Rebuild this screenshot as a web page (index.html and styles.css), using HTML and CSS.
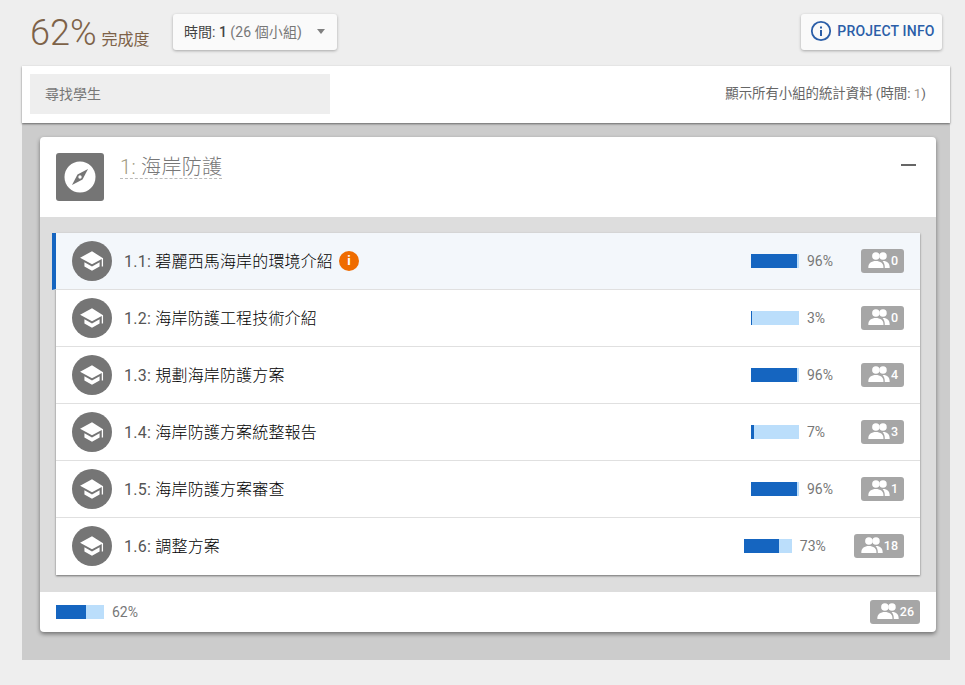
FILE: index.html
```html
<!DOCTYPE html>
<html lang="zh-Hant">
<head>
    <meta charset="UTF-8">
    <title>完成度</title>
    <link rel="stylesheet" href="styles.css">
</head>
<body>
<svg class="defs" width="0" height="0">
    <symbol id="cap" viewBox="0 0 24 24">
        <path d="M5 13.18v4L12 21l7-3.82v-4L12 17l-7-3.82zM12 3 1 9l11 6 9-4.91V17h1.200V9.500L12 3z"/>
    </symbol>
    <symbol id="people" viewBox="0 0 24 18">
        <circle cx="8.5" cy="4.6" r="4.2"/>
        <circle cx="16.5" cy="4.6" r="4.2"/>
        <path d="M0 17c0-4.6 3.6-7 8.5-7s8.5 2.4 8.5 7v1H0z"/>
        <path d="M16 10.100c4.900-.4 8 2.300 8 6.900v1h-5.500v-1c0-2.900-.9-5.200-2.500-6.900z"/>
    </symbol>
</svg>

<header class="topbar">
    <div class="score"><span class="score-num">62%</span> <span class="score-label">完成度</span></div>
    <div class="picker">
        <span>時間: <b>1</b> <span class="muted">(26 個小組)</span></span>
        <i class="caret"></i>
    </div>
    <button class="info-btn">
        <svg width="22" height="22" viewBox="0 0 22 22">
            <circle cx="11" cy="11" r="9.200" fill="none" stroke="#2b5ea8" stroke-width="1.800"/>
            <rect x="10" y="10" width="2" height="6" fill="#2b5ea8"/>
            <rect x="10" y="6.500" width="2" height="2" fill="#2b5ea8"/>
        </svg>
        PROJECT INFO
    </button>
</header>

<main class="panel">
    <div class="filter">
        <div class="search">尋找學生</div>
        <div class="filter-note">顯示所有小組的統計資料 (時間: <span class="faint">1</span>)</div>
    </div>

    <section class="card">
        <div class="card-head">
            <div class="unit-icon">
                <svg width="32" height="32" viewBox="0 0 32 32">
                    <circle cx="16" cy="16" r="15.500" fill="#fff"/>
                    <path d="M24 8 18.500 18.500 8 24l5.500-10.500z" fill="#757575"/>
                    <circle cx="16" cy="16" r="1.700" fill="#fff"/>
                </svg>
            </div>
            <h2 class="unit-title"><span class="faint-num">1:</span> 海岸防護</h2>
            <i class="collapse"></i>
        </div>

        <div class="card-body">
            <ul class="steps">
                <li class="step active">
                    <div class="step-icon"><svg width="26" height="26"><use href="#cap"/></svg></div>
                    <div class="step-name"><span class="num">1.1:</span> 碧麗西馬海岸的環境介紹</div>
                    <span class="alert">i</span>
                    <div class="bar"><div class="fill" style="width:96%"></div></div>
                    <span class="pct">96%</span>
                    <span class="badge"><svg width="22" height="16"><use href="#people"/></svg>0</span>
                </li>
                <li class="step">
                    <div class="step-icon"><svg width="26" height="26"><use href="#cap"/></svg></div>
                    <div class="step-name"><span class="num">1.2:</span> 海岸防護工程技術介紹</div>
                    <div class="bar"><div class="fill" style="width:3%"></div></div>
                    <span class="pct">3%</span>
                    <span class="badge"><svg width="22" height="16"><use href="#people"/></svg>0</span>
                </li>
                <li class="step">
                    <div class="step-icon"><svg width="26" height="26"><use href="#cap"/></svg></div>
                    <div class="step-name"><span class="num">1.3:</span> 規劃海岸防護方案</div>
                    <div class="bar"><div class="fill" style="width:96%"></div></div>
                    <span class="pct">96%</span>
                    <span class="badge"><svg width="22" height="16"><use href="#people"/></svg>4</span>
                </li>
                <li class="step">
                    <div class="step-icon"><svg width="26" height="26"><use href="#cap"/></svg></div>
                    <div class="step-name"><span class="num">1.4:</span> 海岸防護方案統整報告</div>
                    <div class="bar"><div class="fill" style="width:7%"></div></div>
                    <span class="pct">7%</span>
                    <span class="badge"><svg width="22" height="16"><use href="#people"/></svg>3</span>
                </li>
                <li class="step">
                    <div class="step-icon"><svg width="26" height="26"><use href="#cap"/></svg></div>
                    <div class="step-name"><span class="num">1.5:</span> 海岸防護方案審查</div>
                    <div class="bar"><div class="fill" style="width:96%"></div></div>
                    <span class="pct">96%</span>
                    <span class="badge"><svg width="22" height="16"><use href="#people"/></svg>1</span>
                </li>
                <li class="step">
                    <div class="step-icon"><svg width="26" height="26"><use href="#cap"/></svg></div>
                    <div class="step-name"><span class="num">1.6:</span> 調整方案</div>
                    <div class="bar"><div class="fill" style="width:73%"></div></div>
                    <span class="pct">73%</span>
                    <span class="badge"><svg width="22" height="16"><use href="#people"/></svg>18</span>
                </li>
            </ul>
        </div>

        <div class="card-foot">
            <div class="bar"><div class="fill" style="width:62%"></div></div>
            <span class="pct">62%</span>
            <span class="badge"><svg width="22" height="16"><use href="#people"/></svg>26</span>
        </div>
    </section>
</main>
</body>
</html>
```

FILE: styles.css
```css
* { margin: 0; padding: 0; box-sizing: border-box; }
ul { list-style: none; }
body {
    background-color: #eee;
    font-family: Roboto, "Noto Sans CJK TC", sans-serif;
    color: #333;
    height: 685px;
    overflow: hidden;
}
.defs { display: block; height: 0; }

/* top bar */
.topbar {
    height: 66px;
    padding: 14px 23px 0 30px;
    display: flex;
    align-items: flex-start;
}
.score {
    width: 143px;
    height: 36px;
    display: flex;
    align-items: baseline;
    gap: 5px;
    color: #7d6248;
    white-space: nowrap;
}
.score-num { font-size: 36px; font-weight: 300; line-height: 38px; }
.score-label { font-size: 16px; }
.picker {
    width: 164px;
    height: 36px;
    padding: 0 12px 2px 11px;
    display: flex;
    align-items: center;
    justify-content: space-between;
    background-color: #fafafa;
    border-radius: 3px;
    box-shadow: 0 1px 3px rgba(0,0,0,.3);
    font-size: 14px;
    color: #444;
    white-space: nowrap;
}
.picker b { font-weight: 500; }
.muted { color: #777; letter-spacing: .1px; }
.caret {
    width: 0;
    height: 0;
    border-left: 4.500px solid transparent;
    border-right: 4.500px solid transparent;
    border-top: 5px solid #808080;
}
.info-btn {
    margin-left: auto;
    width: 141px;
    height: 36px;
    padding: 0 0 2px 2px;
    display: flex;
    align-items: center;
    justify-content: center;
    gap: 5px;
    border: 0;
    background-color: #fafafa;
    border-radius: 3px;
    box-shadow: 0 1px 3px rgba(0,0,0,.3);
    font-family: inherit;
    font-size: 14px;
    font-weight: 500;
    letter-spacing: .2px;
    color: #2b5ea8;
    white-space: nowrap;
}

/* main panel */
.panel {
    margin-left: 22px;
    width: 928px;
    height: 594px;
    background-color: #ccc;
}
.filter {
    height: 57px;
    padding: 8px 24px 0 8px;
    display: flex;
    justify-content: space-between;
    background-color: #fff;
    box-shadow: 0 1px 2px rgba(0,0,0,.5);
    position: relative;
}
.search {
    width: 300px;
    height: 40px;
    padding-left: 15px;
    line-height: 40px;
    background-color: #eee;
    font-size: 14px;
    color: #777;
}
.filter-note {
    line-height: 40px;
    font-size: 13.400px;
    color: #666;
    white-space: nowrap;
}
.faint { color: #a09a90; }

/* unit card */
.card {
    margin: 14px 0 0 18px;
    width: 896px;
    border-radius: 4px;
    background-color: #fff;
    box-shadow: 0 2px 4px rgba(0,0,0,.45);
    overflow: hidden;
}
.card-head {
    height: 80px;
    padding: 16px 16px 0;
    display: flex;
    align-items: flex-start;
}
.unit-icon {
    width: 48px;
    height: 48px;
    display: flex;
    align-items: center;
    justify-content: center;
    background-color: #757575;
    border-radius: 3px;
}
.unit-title {
    margin: 0 0 0 16px;
    height: 26px;
    padding-top: 1px;
    font-size: 20px;
    line-height: 26px;
    font-weight: 300;
    letter-spacing: .3px;
    color: #777;
    border-bottom: 1px dashed #bbb;
}
.faint-num { color: #a09a80; }
.collapse {
    margin: 11px 4px 0 auto;
    width: 15px;
    height: 2px;
    background-color: #666;
}
.card-body {
    height: 375px;
    padding: 16px 16px 17px;
    background-color: #ddd;
}
.steps {
    background-color: #fff;
    box-shadow: 0 1px 2px rgba(0,0,0,.5);
}
.step {
    height: 57px;
    padding: 0 16px;
    display: flex;
    align-items: center;
    border-bottom: 1px solid #e0e0e0;
}
.step:last-child { border-bottom-color: transparent; }
.step.active {
    background-color: #f3f7fb;
    border-left: 4px solid #1565c0;
    margin-left: -4px;
}
.step-icon {
    width: 40px;
    height: 40px;
    flex: none;
    display: flex;
    align-items: center;
    justify-content: center;
    border-radius: 50%;
    background-color: #757575;
    fill: #fff;
}
.step-name {
    margin-left: 12px;
    padding-bottom: 2px;
    font-size: 16px;
    font-weight: 300;
    letter-spacing: .15px;
    color: #000;
    white-space: nowrap;
}
.num { color: #555; font-weight: 400; letter-spacing: .3px; }
.alert {
    margin: 0 0 1px 6px;
    width: 20px;
    height: 20px;
    border-radius: 50%;
    background-color: #ef6c00;
    color: #fff;
    font-size: 13px;
    font-weight: 700;
    line-height: 20px;
    text-align: center;
}
.bar {
    margin-left: auto;
    width: 48px;
    height: 14px;
    flex: none;
    background-color: #bbdefb;
}
.fill {
    height: 100%;
    background-color: #1565c0;
}
.pct {
    margin-left: 8px;
    width: 28px;
    font-size: 14px;
    color: #777;
}
.badge {
    margin-left: 26px;
    height: 24px;
    padding: 0 6px 2px 7px;
    display: flex;
    align-items: center;
    gap: 1px;
    background-color: #a6a6a6;
    border-radius: 3px;
    fill: #fff;
    color: #fff;
    font-size: 12.500px;
    font-weight: 500;
}
.card-foot {
    height: 40px;
    padding: 0 16px;
    display: flex;
    align-items: center;
}
.card-foot .bar { margin-left: 0; }
.card-foot .badge { margin-left: auto; }
```
